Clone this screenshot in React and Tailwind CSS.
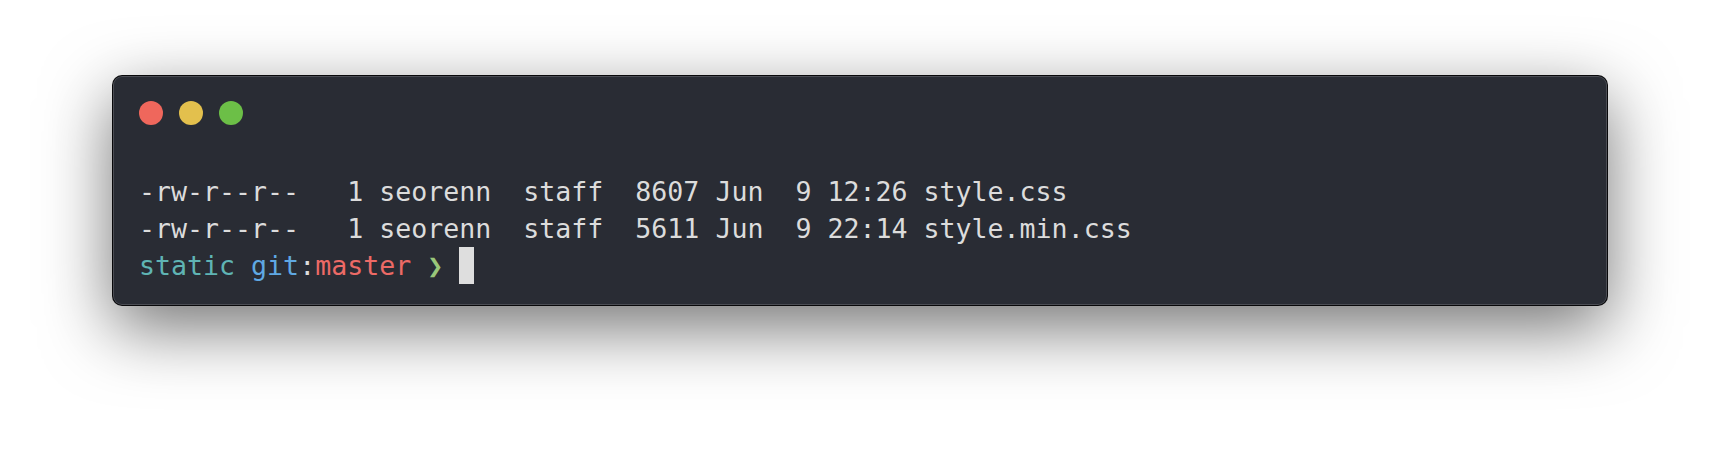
import React from 'react';

const Line = ({ children }) => <div className="h-[37px] whitespace-pre">{children}</div>;

export default function App() {
  return (
    <div className="w-[1720px] h-[454px] bg-white overflow-hidden pt-[75px] px-[112px]">
      <div className="h-[231px] rounded-[10px] bg-[#292c34] border border-black/80 shadow-[0_22px_68px_rgba(0,0,0,0.55),inset_0_0_0_1px_rgba(255,255,255,0.16)] px-[26px] pt-[25px]">
        <div className="flex gap-4">
          <span className="w-6 h-6 rounded-full bg-[#ef675c]" />
          <span className="w-6 h-6 rounded-full bg-[#e3c04d]" />
          <span className="w-6 h-6 rounded-full bg-[#6cbf47]" />
        </div>
        <div
          className="mt-[48px] text-[26.6px] leading-[37px] text-[#dcdcdc]"
          style={{ fontFamily: '"DejaVu Sans Mono", "Liberation Mono", monospace' }}
        >
          <Line>-rw-r--r--   1 seorenn  staff  8607 Jun  9 12:26 style.css</Line>
          <Line>-rw-r--r--   1 seorenn  staff  5611 Jun  9 22:14 style.min.css</Line>
          <Line>
            <span className="text-[#5fb4b4]">static</span>{' '}
            <span className="text-[#5fa8e3]">git</span>
            <span>:</span>
            <span className="text-[#ec6a66]">master</span>{' '}
            <span className="text-[#99c77a]">❯</span>{' '}
            <span className="inline-block w-[15px] h-[37px] align-top bg-[#dedede]" />
          </Line>
        </div>
      </div>
    </div>
  );
}
